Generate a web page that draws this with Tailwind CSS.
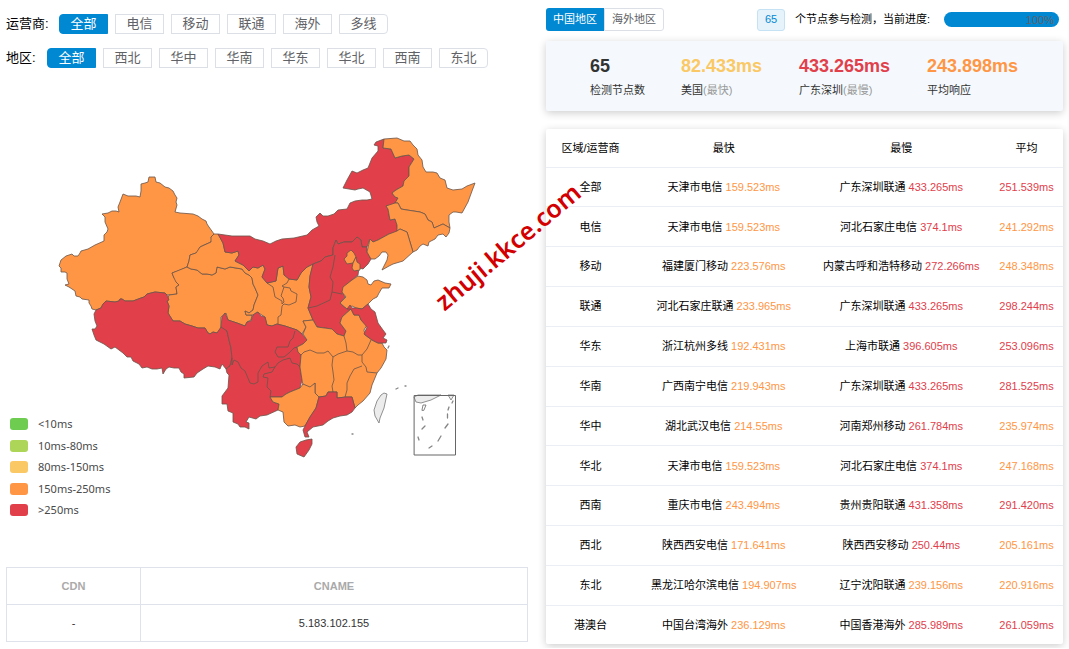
<!DOCTYPE html>
<html lang="zh-CN">
<head>
<meta charset="utf-8">
<meta name="viewport" content="width=device-width, initial-scale=1">
<title>节点检测</title>
<script src="https://cdn.jsdelivr.net/npm/@tailwindcss/browser@4"></script>
</head>
<body class="bg-white text-[11px] text-black font-['Liberation_Sans','Noto_Sans_CJK_SC',sans-serif]">
<main class="relative grid grid-cols-[522fr_517fr] gap-[18px] px-1.5 pt-2 pb-1">
  <section class="flex flex-col">
    <div class="mt-1.5 flex h-5 items-center">
      <span id="isp" class="w-[53px] text-[13px]">运营商:</span>
      <div role="group" aria-labelledby="isp" class="flex gap-[7px] text-[13px] leading-[18px] text-[#606266]">
        <button class="h-5 w-[49px] rounded-l-sm border border-[#0188d3] bg-[#0188d3] text-white">全部</button>
        <button class="h-5 w-[49px] border border-[#dcdfe6]">电信</button>
        <button class="h-5 w-[49px] border border-[#dcdfe6]">移动</button>
        <button class="h-5 w-[49px] border border-[#dcdfe6]">联通</button>
        <button class="h-5 w-[49px] border border-[#dcdfe6]">海外</button>
        <button class="h-5 w-[49px] rounded-r-sm border border-[#dcdfe6]">多线</button>
      </div>
    </div>
    <div class="mt-3.5 flex h-5 items-center">
      <span id="area" class="w-[41px] text-[13px]">地区:</span>
      <div role="group" aria-labelledby="area" class="flex gap-[7px] text-[13px] leading-[18px] text-[#606266]">
        <button class="h-5 w-[49px] rounded-l-sm border border-[#0188d3] bg-[#0188d3] text-white">全部</button>
        <button class="h-5 w-[49px] border border-[#dcdfe6]">西北</button>
        <button class="h-5 w-[49px] border border-[#dcdfe6]">华中</button>
        <button class="h-5 w-[49px] border border-[#dcdfe6]">华南</button>
        <button class="h-5 w-[49px] border border-[#dcdfe6]">华东</button>
        <button class="h-5 w-[49px] border border-[#dcdfe6]">华北</button>
        <button class="h-5 w-[49px] border border-[#dcdfe6]">西南</button>
        <button class="h-5 w-[49px] rounded-r-sm border border-[#dcdfe6]">东北</button>
      </div>
    </div>
    <div class="relative mt-3">
      <svg class="block w-full" viewBox="6 80 522 487" role="img" aria-label="全国响应时间地图" stroke="#6a5449" stroke-opacity=".8" stroke-width="1" stroke-linejoin="round">
        <g fill="#ff9645">
          <!-- 新疆 -->
          <path d="M152 177L155 177L156 182L160 183L165 187L169 188L173 191L175 195L177 198L176 202L177 205L175 212L180 213L193 214L198 216L202 219L206 221L207 224L209 227L214 234L211 237L212 239L211 242L204 245L200 247L198 251L196 253L190 255L189 261L187 267L178 271L172 273L174 278L177 280L176 282L179 285L176 287L177 294L167 295L165 293L155 292L147 294L144 297L141 298L133 301L125 301L122 299L120 299L119 301L115 302L106 301L103 304L101 308L96 310L92 309L91 306L89 303L89 300L82 299L80 297L76 296L75 291L69 287L65 285L69 284L67 279L67 273L65 272L61 272L61 268L59 266L61 260L66 256L72 254L74 256L78 256L80 253L81 251L88 249L95 245L104 241L104 235L107 232L108 229L105 222L105 217L102 214L108 213L112 211L116 211L119 212L118 207L120 202L123 194L128 196L136 196L140 197L141 191L141 184L145 183L148 182L149 177Z"/>
          <!-- 青海 -->
          <path d="M187 267L191 269L197 270L202 274L207 274L212 275L216 273L217 267L221 268L225 269L230 267L236 268L242 269L245 273L249 275L252 278L253 284L255 288L258 295L256 300L254 305L253 310L249 313L245 311L246 315L252 315L251 320L247 322L245 326L237 323L228 320L226 313L221 317L221 328L217 333L213 332L210 334L208 333L205 328L198 328L192 326L185 324L180 321L173 321L168 313L169 306L167 301L169 295L177 294L176 287L179 285L176 282L174 278L172 273Z"/>
          <!-- 甘肃 宁夏 陕西 -->
          <path d="M187 267L189 261L190 255L196 253L200 247L211 242L211 237L214 234L218 234L223 243L225 252L232 253L238 251L239 255L235 261L243 265L249 271L253 267L258 268L263 265L265 269L262 277L267 283L276 281L278 268L283 266L284 275L289 279L297 280L301 273L307 267L313 264L310 276L309 287L311 297L308 308L313 320L303 321L306 327L302 334L297 330L291 328L285 326L277 324L272 326L267 325L265 317L257 312L253 315L246 315L245 311L249 313L253 310L254 305L256 300L258 295L255 288L253 284L252 278L249 275L245 273L242 269L236 268L230 267L225 269L221 268L217 267L216 273L212 275L207 274L202 274L197 270L191 269Z"/>
        </g>
        <g fill="#e1404b">
          <!-- 西藏 -->
          <path d="M167 295L169 300L167 301L169 306L168 313L173 321L180 321L185 324L192 326L198 328L205 328L208 333L210 334L213 332L217 333L221 327L224 328L227 331L229 340L231 348L232 358L230 366L226 369L222 364L220 369L215 367L208 366L203 369L197 373L194 377L184 378L184 374L181 372L179 368L174 368L169 367L166 369L163 374L162 368L157 369L152 369L147 367L142 368L139 364L133 361L131 357L127 357L123 353L115 347L111 349L104 344L96 340L94 335L92 329L95 329L97 326L95 321L94 314L96 310L101 308L103 304L106 301L115 302L119 301L120 299L122 299L125 301L133 301L141 298L144 297L147 294L155 292L165 293Z"/>
          <!-- 内蒙古 -->
          <path d="M218 234L232 236L250 236L255 239L263 241L270 244L276 241L282 239L294 238L307 235L312 230L319 226L317 222L316 217L320 213L323 216L328 216L334 214L338 210L347 209L350 203L355 201L362 200L367 200L372 199L370 192L363 188L358 189L355 190L343 188L347 180L352 171L357 173L363 170L368 168L372 158L378 151L378 146L374 145L376 142L384 139L383 148L391 149L395 158L402 156L409 155L414 159L409 167L409 176L404 181L403 186L396 190L392 193L395 197L398 198L395 203L393 206L386 206L388 209L390 220L395 219L397 225L398 232L389 234L378 240L373 242L370 239L367 247L362 247L361 240L357 237L352 242L344 242L338 244L336 240L333 248L333 255L325 257L321 261L313 264L307 267L301 273L297 280L289 279L284 275L283 266L278 268L276 281L267 283L262 277L265 269L263 265L258 268L253 267L249 271L243 265L235 261L239 255L238 251L232 253L225 252L223 243Z"/>
          <!-- 河北 山西 河南 -->
          <path d="M313 264L321 261L325 257L333 255L333 248L336 240L338 244L344 242L352 242L357 237L361 240L362 247L367 247L367 252L371 259L368 264L363 269L359 268L358 275L352 280L345 286L342 292L345 297L340 303L344 307L351 309L342 317L340 323L346 331L344 336L337 334L332 329L317 327L313 320L308 308L311 297L309 287L310 276Z"/>
          <!-- 四川 重庆 贵州 云南 -->
          <path d="M221 327L222 317L225 313L228 320L237 323L245 326L247 322L251 321L253 315L258 312L261 316L265 317L267 325L272 326L277 324L285 326L297 330L302 334L307 340L303 344L297 347L298 352L301 355L300 367L302 380L300 388L290 392L286 394L282 397L270 397L273 402L279 404L278 410L267 415L260 416L256 419L249 417L246 422L249 423L249 429L245 427L240 427L238 424L233 422L233 413L228 411L227 404L222 404L222 396L228 388L229 375L227 373L226 369L230 366L232 358L231 348L229 340L227 331Z"/>
        </g>
        <g fill="#ff9645">
          <!-- 黑龙江 吉林 辽宁 -->
          <path d="M384 139L397 138L404 141L410 141L413 145L417 149L418 155L422 160L423 167L426 172L433 172L437 173L440 178L445 180L447 188L453 190L462 189L467 186L475 183L472 191L468 202L462 213L456 212L453 212L449 215L449 222L450 228L443 224L434 228L432 222L428 220L425 214L420 212L407 210L401 209L398 203L395 203L398 198L395 197L392 193L396 190L403 186L404 181L409 176L409 167L414 159L409 155L402 156L395 158L391 149L383 148Z"/>
          <path d="M386 206L395 203L398 203L401 209L407 210L420 212L425 214L428 220L432 222L434 228L443 224L450 228L449 233L446 237L443 234L438 235L435 239L429 242L428 246L423 244L420 246L417 250L413 252L410 242L407 232L400 229L397 231L397 225L395 219L390 220L388 209Z"/>
          <path d="M397 231L400 229L407 232L410 242L413 252L403 261L393 264L389 266L382 270L384 266L387 260L388 255L386 252L382 252L379 256L375 259L371 259L367 252L370 239L373 242L378 240L389 234Z"/>
          <!-- 北京 天津 -->
          <path d="M344 259L347 256L347 253L351 250L354 253L356 257L353 263L347 264Z"/>
          <path d="M356 257L357 262L360 264L360 270L354 271L352 268L353 263Z"/>
          <!-- 山东 -->
          <path d="M342 292L343 287L352 280L358 276L363 277L367 280L368 284L371 285L374 281L378 280L385 283L391 284L389 288L382 288L379 293L377 297L373 299L368 304L362 309L356 308L352 306L347 309L340 303L346 297Z"/>
          <!-- 湖北 安徽 湖南 江西 浙江 福建 -->
          <path d="M303 321L313 320L317 327L332 329L337 334L344 336L346 331L340 323L342 317L351 309L354 315L359 315L361 320L367 325L364 330L365 335L372 340L378 343L382 343L384 347L387 350L386 359L381 368L377 373L372 385L370 393L363 401L358 405L355 408L352 397L346 397L337 398L337 392L328 392L326 396L319 397L315 393L315 383L310 388L303 385L302 380L300 367L301 355L298 352L297 347L303 344L307 340L303 334L306 327Z"/>
          <!-- 广西 -->
          <path d="M270 397L282 397L286 394L290 392L300 388L303 384L310 387L315 383L315 393L319 397L316 408L310 417L305 426L300 427L295 425L288 426L284 422L283 412L278 410L279 404L273 402Z"/>
        </g>
        <g fill="#e1404b">
          <!-- 江苏 上海 -->
          <path d="M350 305L352 308L356 308L362 309L368 304L371 309L375 312L378 323L383 330L386 334L383 338L387 340L386 343L382 343L378 343L372 340L364 334L367 327L361 320L359 315L354 315L351 309L347 309Z"/>
          <!-- 广东 海南 -->
          <path d="M319 397L326 396L328 392L337 392L337 398L346 397L352 397L355 408L352 412L347 415L340 416L333 418L328 421L323 425L318 426L313 427L307 432L309 437L305 437L303 430L305 426L310 417L316 408Z"/>
          <path d="M296 447L300 442L306 440L312 439L312 444L309 450L304 457L297 454Z"/>
        </g>
        <!-- 省界 -->
        <g fill="none">
          <path d="M267 283L273 287L274 292L275 297L282 301L282 304L284 302L283 298L281 296L283 290L284 287L282 286L287 283L289 279M284 287L290 288L291 291L297 294L296 302L289 305L284 304L282 306L281 315L278 317L278 324"/>
          <path d="M335 255L333 267L330 277L333 282L332 292L342 294M332 292L330 300L317 306L308 308"/>
          <path d="M232 358L232 365L234 360L238 362L241 368L245 371L250 383L254 384L258 382L258 373L262 366L268 362L269 368L275 367L272 372L264 374L263 377L268 378L267 387L271 391L270 397"/>
          <path d="M295 331L293 338L290 341L288 347L281 347L277 347L275 352L278 357L284 357L289 353L294 348L297 347M275 367L278 363L283 360L290 358L292 363L297 364L300 367"/>
          <path d="M301 355L304 352L310 350L317 353L324 353L328 351L333 357L338 354L347 351L346 343L344 336M333 357L332 365L333 372L334 380L332 386L333 392M347 351L353 352L358 355L362 355L367 349L371 340M362 355L362 362L366 367L367 372L377 373M362 366L354 369L350 376L347 383L347 390L345 397"/>
        </g>
        <g fill="#ececec" stroke="#777">
          <path d="M377 401L381 395L384 393L387 394L384 408L380 418L379 423L375 416L374 410Z"/>
          <path d="M414 397L418 395H441L431 400L421 403L416 402Z"/>
          <path d="M448 395H454L451 400Z"/>
        </g>
        <g fill="none" stroke="#666" stroke-linecap="round">
          <path stroke-opacity="1" d="M414.500 395.500H455.500V455H414.500Z"/>
          <path d="M422 410L423 405L426 405L424 410Z"/>
          <path stroke-width="1.300" d="M453 401L452 403M449 407L448 410M447.500 414V418M448 424L445 428M441 436L438 441M432 446L429 448M418 437L419 440M425 426L422 429M422 417L423 420M396 389L398 388M405 386H406M352 434H353M389 346L388 348"/>
        </g>
      </svg>
      <ul class="absolute top-[336px] left-1 flex h-[102px] flex-col justify-between font-['Noto_Sans',sans-serif] leading-4 text-[#4a4a4a]">
        <li class="flex items-center gap-2.5"><i class="h-3 w-[18px] rounded-[3px] bg-[#6ecd50]"></i>&lt;10ms</li>
        <li class="flex items-center gap-2.5"><i class="h-3 w-[18px] rounded-[3px] bg-[#add557]"></i>10ms-80ms</li>
        <li class="flex items-center gap-2.5"><i class="h-3 w-[18px] rounded-[3px] bg-[#fac864]"></i>80ms-150ms</li>
        <li class="flex items-center gap-2.5"><i class="h-3 w-[18px] rounded-[3px] bg-[#ff9645]"></i>150ms-250ms</li>
        <li class="flex items-center gap-2.5"><i class="h-3 w-[18px] rounded-[3px] bg-[#e1404b]"></i>&gt;250ms</li>
      </ul>
    </div>
    <table class="w-full table-fixed border-collapse text-center text-[#333]">
      <colgroup><col class="w-[134px]"><col></colgroup>
      <thead><tr class="h-[37px] text-[#aaa]"><th class="border border-[#dfe2ea]">CDN</th><th class="border border-[#dfe2ea]">CNAME</th></tr></thead>
      <tbody><tr class="h-[37px]"><td class="border border-[#dfe2ea]">-</td><td class="border border-[#dfe2ea]">5.183.102.155</td></tr></tbody>
    </table>
  </section>

  <section class="flex flex-col">
    <div class="flex h-[23px] items-center pr-1">
      <div class="flex">
        <button class="h-[23px] w-[58px] rounded-l-[3px] bg-[#0188d3] text-white">中国地区</button>
        <button class="h-[23px] w-[60px] rounded-r-[3px] border border-[#dcdfe6] text-[#606266]">海外地区</button>
      </div>
      <span class="ml-auto flex h-[22px] w-7 items-center justify-center rounded-[3px] border border-[#c5e2f4] bg-[#e6f3fb] text-[#0188d3]">65</span>
      <span class="ml-2.5 w-[149px]">个节点参与检测，当前进度:</span>
      <div role="progressbar" aria-label="当前进度" aria-valuenow="100" class="h-[15px] w-[115px] rounded-full bg-[#0188d3] pr-[5px] text-right leading-4 text-[#606266]">100%</div>
    </div>
    <dl class="mt-2.5 flex h-[70px] rounded-xs bg-[#f5f9fd] pt-[13px] pl-11 leading-[15px] text-[#333] shadow-[0_2px_9px_rgba(0,0,0,0.2)]">
      <div class="flex w-[91px] flex-col-reverse justify-end gap-[5px]"><dt>检测节点数</dt><dd class="text-lg leading-6 font-bold">65</dd></div>
      <div class="flex w-[118px] flex-col-reverse justify-end gap-[5px]"><dt>美国<span class="text-[#999]">(最快)</span></dt><dd class="text-lg leading-6 font-bold text-[#fac864]">82.433ms</dd></div>
      <div class="flex w-32 flex-col-reverse justify-end gap-[5px]"><dt>广东深圳<span class="text-[#999]">(最慢)</span></dt><dd class="text-lg leading-6 font-bold text-[#e1404b]">433.265ms</dd></div>
      <div class="flex flex-col-reverse justify-end gap-[5px]"><dt>平均响应</dt><dd class="text-lg leading-6 font-bold text-[#ff9645]">243.898ms</dd></div>
    </dl>
    <div class="mt-[18px] rounded-xs shadow-[0_2px_9px_rgba(0,0,0,0.2)]">
      <table class="h-[515px] w-full table-fixed text-center">
        <colgroup><col class="w-[89px]"><col><col><col class="w-[73px]"></colgroup>
        <thead><tr class="h-[38px] border-b border-[#ebeef5]"><th class="font-normal">区域/运营商</th><th class="font-normal">最快</th><th class="font-normal">最慢</th><th class="font-normal">平均</th></tr></thead>
        <tbody class="divide-y divide-[#ebeef5]">
          <tr><td>全部</td><td>天津市电信 <span class="text-[#ff9645]">159.523ms</span></td><td>广东深圳联通 <span class="text-[#e1404b]">433.265ms</span></td><td class="text-[#e1404b]">251.539ms</td></tr>
          <tr><td>电信</td><td>天津市电信 <span class="text-[#ff9645]">159.523ms</span></td><td>河北石家庄电信 <span class="text-[#e1404b]">374.1ms</span></td><td class="text-[#ff9645]">241.292ms</td></tr>
          <tr><td>移动</td><td>福建厦门移动 <span class="text-[#ff9645]">223.576ms</span></td><td>内蒙古呼和浩特移动 <span class="text-[#e1404b]">272.266ms</span></td><td class="text-[#ff9645]">248.348ms</td></tr>
          <tr><td>联通</td><td>河北石家庄联通 <span class="text-[#ff9645]">233.965ms</span></td><td>广东深圳联通 <span class="text-[#e1404b]">433.265ms</span></td><td class="text-[#e1404b]">298.244ms</td></tr>
          <tr><td>华东</td><td>浙江杭州多线 <span class="text-[#ff9645]">192.431ms</span></td><td>上海市联通 <span class="text-[#e1404b]">396.605ms</span></td><td class="text-[#e1404b]">253.096ms</td></tr>
          <tr><td>华南</td><td>广西南宁电信 <span class="text-[#ff9645]">219.943ms</span></td><td>广东深圳联通 <span class="text-[#e1404b]">433.265ms</span></td><td class="text-[#e1404b]">281.525ms</td></tr>
          <tr><td>华中</td><td>湖北武汉电信 <span class="text-[#ff9645]">214.55ms</span></td><td>河南郑州移动 <span class="text-[#e1404b]">261.784ms</span></td><td class="text-[#ff9645]">235.974ms</td></tr>
          <tr><td>华北</td><td>天津市电信 <span class="text-[#ff9645]">159.523ms</span></td><td>河北石家庄电信 <span class="text-[#e1404b]">374.1ms</span></td><td class="text-[#ff9645]">247.168ms</td></tr>
          <tr><td>西南</td><td>重庆市电信 <span class="text-[#ff9645]">243.494ms</span></td><td>贵州贵阳联通 <span class="text-[#e1404b]">431.358ms</span></td><td class="text-[#e1404b]">291.420ms</td></tr>
          <tr><td>西北</td><td>陕西西安电信 <span class="text-[#ff9645]">171.641ms</span></td><td>陕西西安移动 <span class="text-[#e1404b]">250.44ms</span></td><td class="text-[#ff9645]">205.161ms</td></tr>
          <tr><td>东北</td><td>黑龙江哈尔滨电信 <span class="text-[#ff9645]">194.907ms</span></td><td>辽宁沈阳联通 <span class="text-[#ff9645]">239.156ms</span></td><td class="text-[#ff9645]">220.916ms</td></tr>
          <tr><td>港澳台</td><td>中国台湾海外 <span class="text-[#ff9645]">236.129ms</span></td><td>中国香港海外 <span class="text-[#e1404b]">285.989ms</span></td><td class="text-[#e1404b]">261.059ms</td></tr>
        </tbody>
      </table>
    </div>
  </section>
  <span class="pointer-events-none absolute top-[226px] left-[417px] rotate-[-40deg] font-['Noto_Sans',sans-serif] text-[25px] leading-10 font-semibold text-[#d20000]">zhuji.kkce.com</span>
</main>
</body>
</html>
